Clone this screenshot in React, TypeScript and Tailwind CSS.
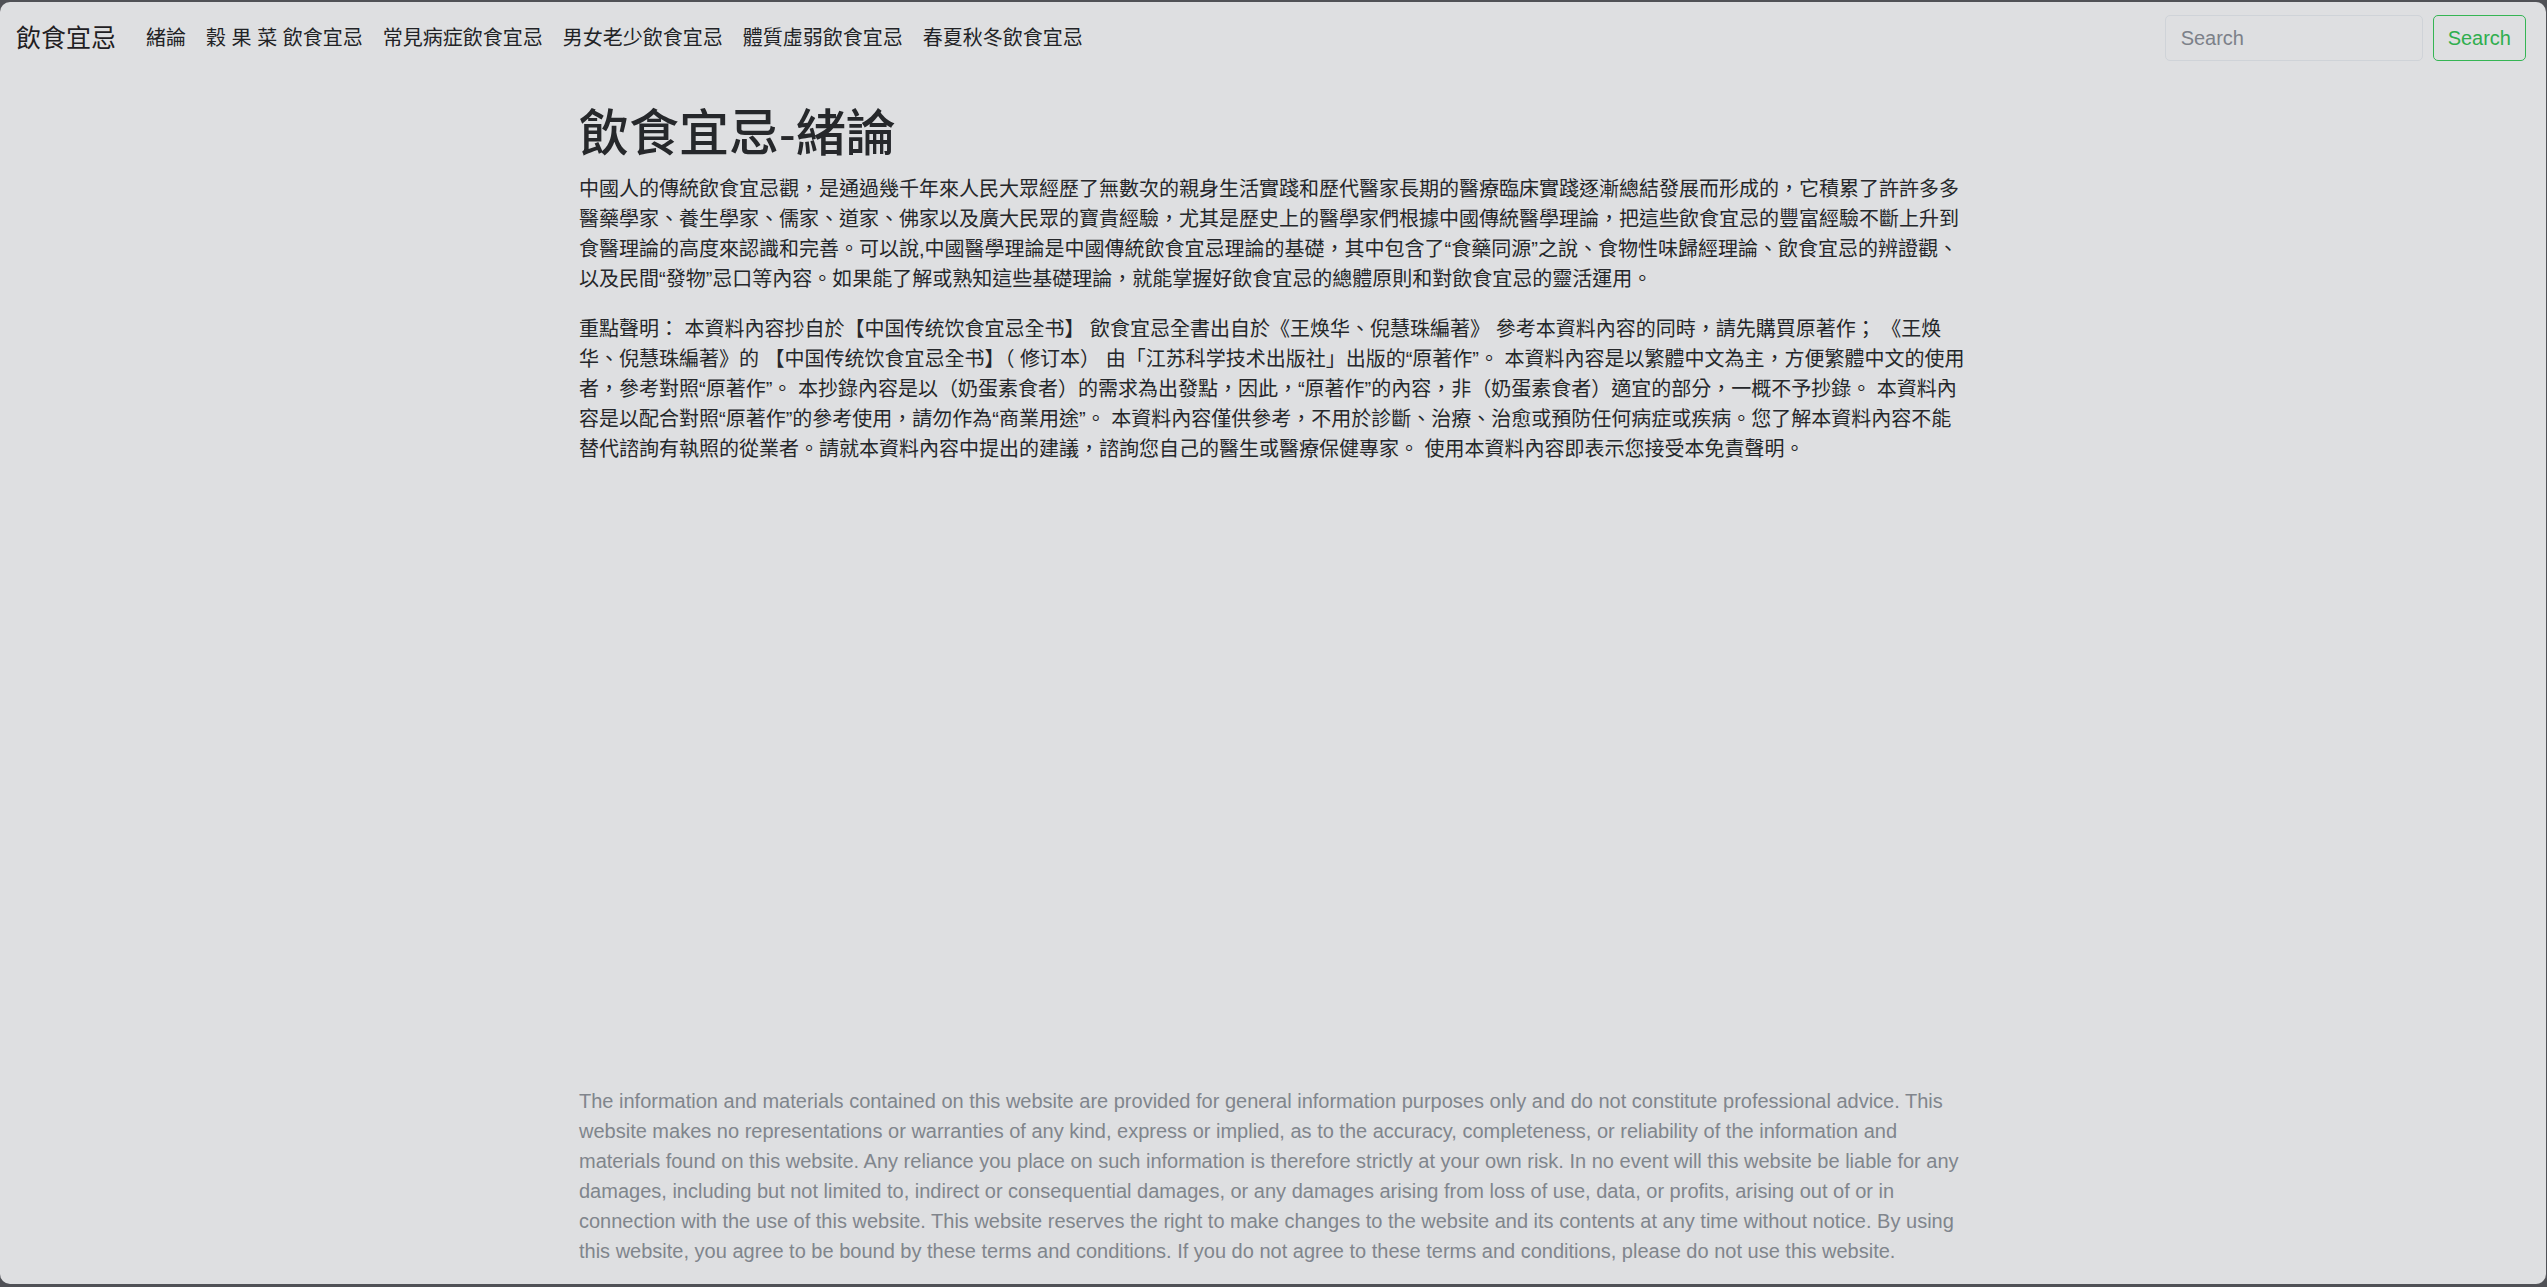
import React from 'react';

const navLinks = ['緒論', '穀 果 菜 飲食宜忌', '常見病症飲食宜忌', '男女老少飲食宜忌', '體質虛弱飲食宜忌', '春夏秋冬飲食宜忌'];

const App: React.FC = () => {
  return (
    <div className="min-h-screen bg-[#505156] pt-[2px] pb-[3px] pr-[1px] flex flex-col font-['Liberation_Sans','Noto_Sans_CJK_TC',sans-serif]">
      <div className="flex-1 flex flex-col rounded-[10px] bg-[#dedfe1] text-[#25272a]">
        {/* navbar */}
        <nav className="flex items-center justify-between pl-4 pr-[20px] pt-[13px] pb-[11px]">
          <div className="flex items-center">
            <a className="text-[25px] leading-[37px] mr-[20px] text-[#1f2023]">飲食宜忌</a>
            <ul className="flex items-center">
              {navLinks.map(link => (
                <li key={link}>
                  <a className="block px-[10px] text-[20px] leading-[30px] text-[#222326] whitespace-pre">{link}</a>
                </li>
              ))}
            </ul>
          </div>
          <form className="flex items-center" onSubmit={e => e.preventDefault()}>
            <input
              type="search"
              placeholder="Search"
              className="w-[258px] h-[46px] mr-[10px] px-[15px] rounded-[5px] border border-[#cfd3d8] bg-transparent text-[20px] placeholder:text-[#7c8189] outline-none"
            />
            <button className="h-[46px] px-[14px] rounded-[5px] border border-[#35b554] text-[#2fae4e] text-[20px]">
              Search
            </button>
          </form>
        </nav>

        {/* article */}
        <main className="w-[1388px] mx-auto mt-[32px]">
          <h1 className="text-[50px] leading-[60px] font-medium mb-[10px] text-[#26282b]">飲食宜忌-緒論</h1>
          <p className="text-[20px] leading-[30px] mb-[20px]">
            中國人的傳統飲食宜忌觀，是通過幾千年來人民大眾經歷了無數次的親身生活實踐和歷代醫家長期的醫療臨床實踐逐漸總結發展而形成的，它積累了許許多多醫藥學家、養生學家、儒家、道家、佛家以及廣大民眾的寶貴經驗，尤其是歷史上的醫學家們根據中國傳統醫學理論，把這些飲食宜忌的豐富經驗不斷上升到食醫理論的高度來認識和完善。可以說,中國醫學理論是中國傳統飲食宜忌理論的基礎，其中包含了“食藥同源”之說、食物性味歸經理論、飲食宜忌的辨證觀、以及民間“發物”忌口等內容。如果能了解或熟知這些基礎理論，就能掌握好飲食宜忌的總體原則和對飲食宜忌的靈活運用。
          </p>
          <p className="text-[20px] leading-[30px] mb-[20px]">
            重點聲明： 本資料內容抄自於【中国传统饮食宜忌全书】 飲食宜忌全書出自於《王焕华、倪慧珠編著》 參考本資料內容的同時，請先購買原著作； 《王焕华、倪慧珠編著》的 【中国传统饮食宜忌全书】（ 修订本） 由「江苏科学技术出版社」出版的“原著作”。 本資料內容是以繁體中文為主，方便繁體中文的使用者，參考對照“原著作”。 本抄錄內容是以（奶蛋素食者）的需求為出發點，因此，“原著作”的內容，非（奶蛋素食者）適宜的部分，一概不予抄錄。 本資料內容是以配合對照“原著作”的參考使用，請勿作為“商業用途”。 本資料內容僅供參考，不用於診斷、治療、治愈或預防任何病症或疾病。您了解本資料內容不能替代諮詢有執照的從業者。請就本資料內容中提出的建議，諮詢您自己的醫生或醫療保健專家。 使用本資料內容即表示您接受本免責聲明。
          </p>
        </main>

        {/* disclaimer */}
        <footer className="w-[1388px] mx-auto mt-auto mb-[18px]">
          <p className="text-[20px] leading-[30px] text-[#80858c]">
            The information and materials contained on this website are provided for general information purposes only and do not constitute professional advice. This website makes no representations or warranties of any kind, express or implied, as to the accuracy, completeness, or reliability of the information and materials found on this website. Any reliance you place on such information is therefore strictly at your own risk. In no event will this website be liable for any damages, including but not limited to, indirect or consequential damages, or any damages arising from loss of use, data, or profits, arising out of or in connection with the use of this website. This website reserves the right to make changes to the website and its contents at any time without notice. By using this website, you agree to be bound by these terms and conditions. If you do not agree to these terms and conditions, please do not use this website.
          </p>
        </footer>
      </div>
    </div>
  );
};

export default App;
